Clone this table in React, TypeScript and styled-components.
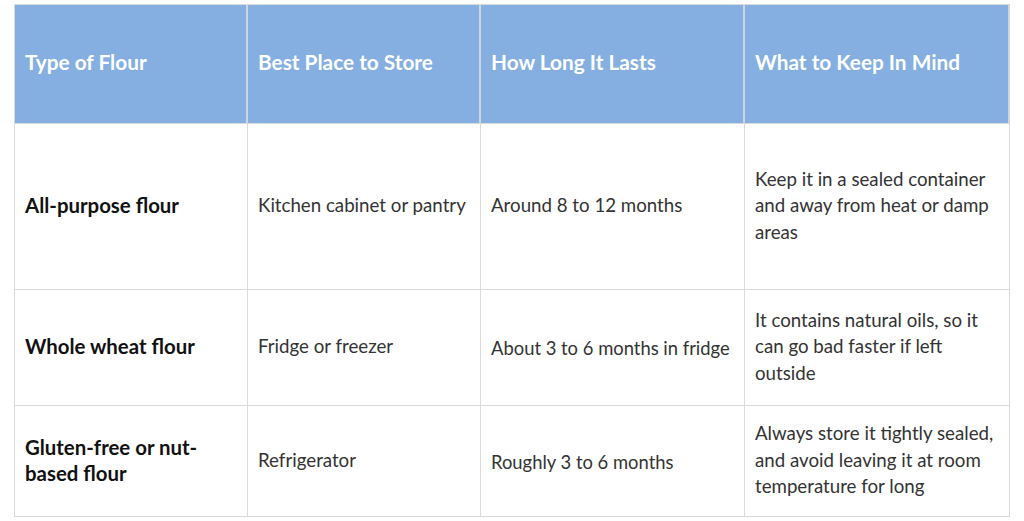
import styled, { createGlobalStyle } from 'styled-components';

const GlobalStyle = createGlobalStyle`
  * {
    box-sizing: border-box;
  }
  body {
    margin: 0;
    background: #fff;
    font-family: Lato, "Noto Sans", "Liberation Sans", sans-serif;
  }
`;

type Row = {
  name: string;
  place: string;
  lasts: string;
  note: string;
  low?: boolean;
};

const rows: Row[] = [
  {
    name: 'All-purpose flour',
    place: 'Kitchen cabinet or pantry',
    lasts: 'Around 8 to 12 months',
    note: 'Keep it in a sealed container and away from heat or damp areas',
  },
  {
    name: 'Whole wheat flour',
    place: 'Fridge or freezer',
    lasts: 'About 3 to 6 months in fridge',
    note: 'It contains natural oils, so it can go bad faster if left outside',
    low: true,
  },
  {
    name: 'Gluten-free or nut-based flour',
    place: 'Refrigerator',
    lasts: 'Roughly 3 to 6 months',
    note: 'Always store it tightly sealed, and avoid leaving it at room temperature for long',
    low: true,
  },
];

const heads = ['Type of Flour', 'Best Place to Store', 'How Long It Lasts', 'What to Keep In Mind'];

function App() {
  return (
    <Page>
      <GlobalStyle />
      <Table>
        {heads.map((h) => (
          <HeadCell key={h}>{h}</HeadCell>
        ))}
        {rows.map((r) => [
          <Cell key={r.name + '-name'} $bold>
            {r.name}
          </Cell>,
          <Cell key={r.name + '-place'}>{r.place}</Cell>,
          <Cell key={r.name + '-lasts'} $small={r.low}>
            {r.lasts}
          </Cell>,
          <Cell key={r.name + '-note'}>{r.note}</Cell>,
        ])}
      </Table>
    </Page>
  );
}

export default App;

const Page = styled.div`
  padding: 4px 14px;
`;

const Table = styled.div`
  display: grid;
  grid-template-columns: 233px 233px 264px 265px;
  grid-template-rows: 119px 166px 116px 111px;
  width: 996px;
  border-top: 1px solid #dadada;
  border-left: 1px solid #dadada;
`;

const HeadCell = styled.div`
  display: flex;
  align-items: center;
  padding: 0 11px 5px 10px;
  background: #84afe0;
  color: #fff;
  font-size: 20.8px;
  font-weight: 700;
  border-right: 2px solid #cdd6e0;
  border-bottom: 1px solid #dadada;
`;

const Cell = styled.div<{ $bold?: boolean; $small?: boolean }>`
  display: flex;
  align-items: center;
  padding: 0 10px 2px 10px;
  color: ${(p) => (p.$bold ? '#111' : '#333')};
  font-size: ${(p) => (p.$bold ? '20.4px' : p.$small ? '18.4px' : '18.7px')};
  font-weight: ${(p) => (p.$bold ? 700 : 400)};
  line-height: 26.5px;
  padding-top: ${(p) => (p.$small ? '4px' : '0')};
  border-right: 1px solid #dadada;
  border-bottom: 1px solid #dadada;
`;
